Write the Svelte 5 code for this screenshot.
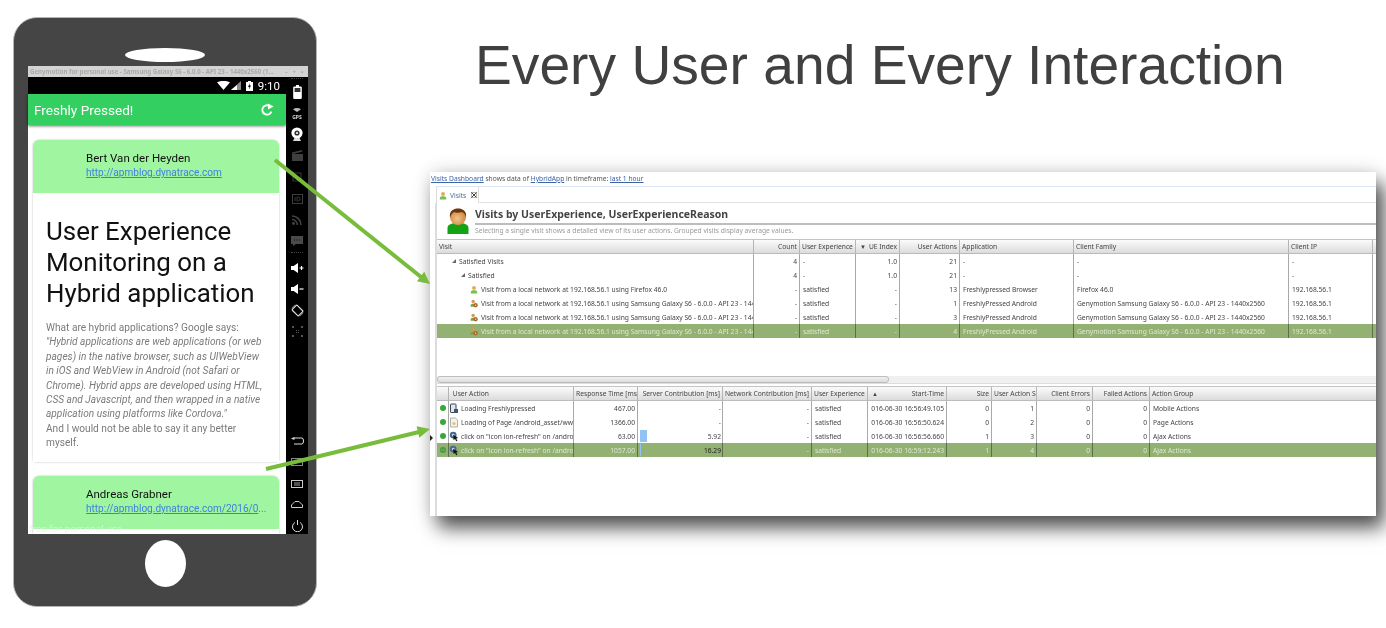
<script>
	const visitRows = [
		{ lvl: 'lvl0', tree: true, name: 'Satisfied Visits', cells: ['4', '-', '1.0', '21', '-', '-', '-'] },
		{ lvl: 'lvl1', tree: true, name: 'Satisfied', cells: ['4', '-', '1.0', '21', '-', '-', '-'] },
		{ lvl: 'lvl2', icon: 'user', name: 'Visit from a local network at 192.168.56.1 using Firefox 46.0', cells: ['-', 'satisfied', '-', '13', 'Freshlypressed Browser', 'Firefox 46.0', '192.168.56.1'] },
		{ lvl: 'lvl2', icon: 'mobile', name: 'Visit from a local network at 192.168.56.1 using Samsung Galaxy S6 - 6.0.0 - API 23 - 1440x2560', cells: ['-', 'satisfied', '-', '1', 'FreshlyPressed Android', 'Genymotion Samsung Galaxy S6 - 6.0.0 - API 23 - 1440x2560', '192.168.56.1'] },
		{ lvl: 'lvl2', icon: 'mobile', name: 'Visit from a local network at 192.168.56.1 using Samsung Galaxy S6 - 6.0.0 - API 23 - 1440x2560', cells: ['-', 'satisfied', '-', '3', 'FreshlyPressed Android', 'Genymotion Samsung Galaxy S6 - 6.0.0 - API 23 - 1440x2560', '192.168.56.1'] },
		{ lvl: 'lvl2', icon: 'mobile', selected: true, name: 'Visit from a local network at 192.168.56.1 using Samsung Galaxy S6 - 6.0.0 - API 23 - 1440x2560', cells: ['-', 'satisfied', '-', '4', 'FreshlyPressed Android', 'Genymotion Samsung Galaxy S6 - 6.0.0 - API 23 - 1440x2560', '192.168.56.1'] }
	];
	// alignment of the visit columns after the first one
	const visitAlign = ['r', 'l', 'r', 'r', 'l', 'l', 'l'];

	const actionRows = [
		{ icon: 'phone', name: 'Loading Freshlypressed', time: '467.00', server: '-', start: '016-06-30 16:56:49.105', size: '0', idx: '1', group: 'Mobile Actions' },
		{ icon: 'page', name: 'Loading of Page /android_asset/www/index.html', time: '1366.00', server: '-', start: '016-06-30 16:56:50.624', size: '0', idx: '2', group: 'Page Actions' },
		{ icon: 'click', name: 'click on "icon ion-refresh" on /android_asset/www', time: '63.00', server: '5.92', bar: 7, start: '016-06-30 16:56:56.660', size: '1', idx: '3', group: 'Ajax Actions' },
		{ icon: 'click', selected: true, name: 'click on "icon ion-refresh" on /android_asset/www', time: '1057.00', server: '16.29', bar: 1, start: '016-06-30 16:59:12.243', size: '1', idx: '4', group: 'Ajax Actions' }
	];
</script>

{#snippet tinyIcon(kind)}
	{#if kind === 'user'}
		<svg class="ico" viewBox="0 0 10 10"><circle cx="5" cy="3" r="2.400" fill="#e8a55a"/><path d="M1 10V8.200C1 6.800 2.400 6 5 6s4 .8 4 2.200V10z" fill="#7ac04c"/></svg>
	{:else if kind === 'mobile'}
		<svg class="ico" viewBox="0 0 10 10"><circle cx="4" cy="2.600" r="2.200" fill="#d89a50"/><path d="M0.800 9V7.400C0.800 6 2 5.200 4 5.200s3 .8 3 2.200V9z" fill="#7fa044"/><circle cx="7" cy="7.200" r="2.700" fill="#a8692c"/><circle cx="7" cy="7.200" r="1" fill="#f0d090"/></svg>
	{:else if kind === 'phone'}
		<svg class="ico big" viewBox="0 0 10 10"><rect x="1.500" y="0.500" width="5.500" height="8.500" rx=".6" fill="#dfe7f2" stroke="#3a4452" stroke-width="1"/><rect x="5" y="5.500" width="4" height="4" fill="#40566e"/></svg>
	{:else if kind === 'page'}
		<svg class="ico big" viewBox="0 0 10 10"><path d="M1.500.5h5l2 2v7h-7z" fill="#f6f3e4" stroke="#8b93a3" stroke-width=".7"/><circle cx="5" cy="6" r="1.600" fill="#e3c56a"/></svg>
	{:else}
		<svg class="ico big" viewBox="0 0 10 10"><circle cx="4.200" cy="3.600" r="3.400" fill="#47688f"/><circle cx="4.200" cy="3.600" r="1.400" fill="#c8d5e6"/><path d="M4.200 3.200l5 3.200-2 .5 1.200 2.400-1.200.5-1.100-2.400-1.600 1.200z" fill="#151515"/></svg>
	{/if}
{/snippet}

<div class="slide">
	<div class="phone">
		<div class="speaker"></div>
		<div class="screen">
			<div class="titlebar">
				<span>Genymotion for personal use - Samsung Galaxy S6 - 6.0.0 - API 23 - 1440x2560 (1...</span>
				<span class="winbtns">–&nbsp;&nbsp;&nbsp;+&nbsp;&nbsp;&nbsp;×</span>
			</div>
			<div class="device">
				<div class="android">
					<div class="statusbar">
						<svg width="13" height="9" viewBox="0 0 13 9"><path d="M0 1.200C3.800-.4 9.200-.4 13 1.200L6.500 9z" fill="#fff"/></svg>
						<svg class="signal" width="10" height="9" viewBox="0 0 10 9"><path d="M10 0v9H0z" fill="#8a8a8a"/><path d="M6 4v5H0z" fill="#fff"/></svg>
						<svg class="battery" width="7" height="10" viewBox="0 0 7 10"><path d="M2 0h3v1h2v9H0V1h2z" fill="#fff"/><path d="M4 2L2 6h1.400L3 8.500 5 4.600H3.600z" fill="#000"/></svg>
						<span class="clock">9:10</span>
					</div>
					<div class="toolbar">
						<span>Freshly Pressed!</span>
						<svg width="14" height="14" viewBox="0 0 14 14"><path d="M11.400 8.600A4.700 4.700 0 1 1 9.600 3" fill="none" stroke="#fff" stroke-width="1.900"/><path d="M8 .4l5.600 3.200L8 6.400z" fill="#fff"/></svg>
					</div>
					<div class="feed">
						<article class="card">
							<header class="card-head">
								<div class="author">Bert Van der Heyden</div>
								<div class="link">http://apmblog.dynatrace.com</div>
							</header>
							<div class="card-body">
								<h1>User Experience<br />Monitoring on a<br />Hybrid application</h1>
								<p>
									What are hybrid applications? Google says:<br />
									<em>"Hybrid applications are web applications (or web<br />
									pages) in the native browser, such as UIWebView<br />
									in iOS and WebView in Android (not Safari or<br />
									Chrome). Hybrid apps are developed using HTML,<br />
									CSS and Javascript, and then wrapped in a native<br />
									application using platforms like Cordova."</em><br />
									And I would not be able to say it any better<br />
									myself.
								</p>
							</div>
						</article>
						<article class="card">
							<header class="card-head">
								<div class="author">Andreas Grabner</div>
								<div class="link clipped"><span>http://apmblog.dynatrace.com/2016/0</span>...</div>
							</header>
							<div class="card-body stub"></div>
						</article>
						<div class="watermark">free for personal use</div>
					</div>
				</div>
				<div class="sidebar">
					<div class="grip"></div>
					<div class="tool"><svg width="9" height="14" viewBox="0 0 9 14"><path d="M3 0h3v1.400h1.600q1.200 0 1.200 1.200v10.200q0 1.200-1.200 1.200H1.400Q.2 14 .2 12.800V2.600q0-1.200 1.200-1.200H3z" fill="#fff"/><rect x="1.600" y="3" width="5.800" height="4" fill="#333"/></svg></div>
					<div class="tool"><svg width="14" height="12" viewBox="0 0 14 12"><path d="M3 2.200q4-2.600 8 0L7 5z" fill="#bbb"/><text x="7" y="11.500" text-anchor="middle" class="gps">GPS</text></svg></div>
					<div class="tool"><svg width="12" height="14" viewBox="0 0 12 14"><circle cx="6" cy="6" r="5.600" fill="#fff"/><circle cx="6" cy="6" r="2.600" fill="#333"/><circle cx="6" cy="6" r="1" fill="#fff"/><path d="M2 14l1.500-3h5L10 14z" fill="#ddd"/></svg></div>
					<div class="tool"><svg width="11" height="11" viewBox="0 0 11 11"><path d="M0 4h11v7H0zM0 2.600L10 0l.4 1.600L.4 4.200z" fill="#3f3f3f"/></svg></div>
					<div class="tool"><svg width="10" height="10" viewBox="0 0 10 10"><path d="M1 1h8v8H1z" fill="none" stroke="#333" stroke-width="1.200"/></svg></div>
					<div class="tool"><svg width="11" height="10" viewBox="0 0 11 10"><rect x=".5" y=".5" width="10" height="9" fill="none" stroke="#3c3c3c"/><path d="M3 3v4M5 3v4h1.500q1.500 0 1.500-2T6.500 3z" fill="none" stroke="#3c3c3c" stroke-width=".9"/></svg></div>
					<div class="tool"><svg width="10" height="10" viewBox="0 0 10 10"><circle cx="1.500" cy="8.500" r="1.400" fill="#444"/><path d="M0 4.600A5.400 5.400 0 0 1 5.400 10M0 1a9 9 0 0 1 9 9" fill="none" stroke="#444" stroke-width="1.500"/></svg></div>
					<div class="tool"><svg width="12" height="10" viewBox="0 0 12 10"><rect width="12" height="8" fill="#4a4a4a"/><path d="M2 8h3L2 10z" fill="#4a4a4a"/><path d="M3 4h1M5.500 4h1M8 4h1" stroke="#111"/></svg></div>
					<div class="grip low"></div>
					<div class="tool"><svg width="13" height="10" viewBox="0 0 13 10"><path d="M0 3h2.600L7 0v10L2.600 7H0z" fill="#fff"/><path d="M8.500 5h4M10.500 3v4" stroke="#fff" stroke-width="1.200"/></svg></div>
					<div class="tool"><svg width="13" height="10" viewBox="0 0 13 10"><path d="M0 3h2.600L7 0v10L2.600 7H0z" fill="#fff"/><path d="M8.500 5h4" stroke="#fff" stroke-width="1.200"/></svg></div>
					<div class="tool"><svg width="13" height="13" viewBox="0 0 13 13"><rect x="3" y="2" width="7" height="9" rx="1" transform="rotate(-45 6.500 6.500)" fill="none" stroke="#ddd" stroke-width="1.200"/><path d="M1 4.500A6 6 0 0 1 4.500 1M12 8.500A6 6 0 0 1 8.500 12" fill="none" stroke="#aaa" stroke-width=".8"/></svg></div>
					<div class="tool"><svg width="11" height="11" viewBox="0 0 11 11"><path d="M0 0h2v2H0zM9 0h2v2H9zM0 9h2v2H0zM9 9h2v2H9zM4 4h1v1H4zM6 4h1v1H6zM4 6h1v1H4zM6 6h1v1H6z" fill="#555"/></svg></div>
					<div class="nav-tools">
						<div class="tool"><svg width="13" height="8" viewBox="0 0 13 8"><path d="M3 1h8q1.500 0 1.500 3T11 7H3" fill="none" stroke="#ddd" stroke-width="1"/><path d="M0 1.400L3.400 0v3z" fill="#ddd"/></svg></div>
						<div class="tool"><svg width="12" height="8" viewBox="0 0 12 8"><rect x=".5" y=".5" width="11" height="7" fill="none" stroke="#888"/></svg></div>
						<div class="tool"><svg width="12" height="8" viewBox="0 0 12 8"><rect x=".5" y=".5" width="11" height="7" fill="none" stroke="#ccc"/><path d="M3 3h6M3 5h6" stroke="#ccc" stroke-width=".8"/></svg></div>
						<div class="tool"><svg width="12" height="7" viewBox="0 0 12 7"><path d="M.5 6.500h11V4L8 .5H4L.5 4z" fill="none" stroke="#ccc"/></svg></div>
						<div class="tool"><svg width="11" height="12" viewBox="0 0 11 12"><path d="M3 2.400a5 5 0 1 0 5 0M5.500 0v5" fill="none" stroke="#ddd" stroke-width="1"/></svg></div>
					</div>
				</div>
			</div>
		</div>
		<div class="home"></div>
	</div>

	<div class="right">
		<div class="headline">Every User and Every Interaction</div>
		<div class="window-shadow">
			<div class="window">
				<div class="crumbs"><u>Visits Dashboard</u> shows data of <u>HybridApp</u> in timeframe: <u>last 1 hour</u></div>
				<div class="tabs">
					<div class="tab">
						<svg class="ico" viewBox="0 0 10 10"><circle cx="5" cy="3" r="2.400" fill="#e8a55a"/><path d="M1 10V8.200C1 6.800 2.400 6 5 6s4 .8 4 2.200V10z" fill="#7ac04c"/></svg>
						<span>Visits</span>
						<svg class="close" viewBox="0 0 6 6"><rect x=".5" y=".5" width="5" height="5" fill="none" stroke="#888" stroke-width=".6"/><path d="M.5.5l5 5M5.500.5l-5 5" stroke="#444" stroke-width="1"/></svg>
					</div>
				</div>
				<div class="panel">
					<div class="view-head">
						<svg class="avatar" width="22" height="26" viewBox="0 0 22 26">
							<defs>
								<radialGradient id="face" cx=".45" cy=".6" r=".6"><stop offset="0" stop-color="#f4c48a"/><stop offset="1" stop-color="#c98238"/></radialGradient>
							</defs>
							<path d="M.5 26v-6c0-3 3-5 10.500-5s10.500 2 10.500 5v6q0 .5-1 .5H1.500Q.5 26.500.5 26z" fill="#14a314"/>
							<circle cx="11" cy="9" r="8" fill="url(#face)"/>
							<path d="M3 9.500C2 3 6.500.5 11 .5s9 2.500 8 9q-1-4.500-4-5.500-5 1.500-8 0-3 1.500-4 5.500z" fill="#6b3413"/>
						</svg>
						<div class="view-titles">
							<div class="view-title">Visits by UserExperience, UserExperienceReason</div>
							<div class="view-sub">Selecting a single visit shows a detailed view of its user actions. Grouped visits display average values.</div>
						</div>
					</div>

					<div class="grid visits head">
						<div class="th">Visit</div>
						<div class="th r">Count</div>
						<div class="th">User Experience</div>
						<div class="th sort"><span>▼</span><span>UE Index</span></div>
						<div class="th r">User Actions</div>
						<div class="th">Application</div>
						<div class="th">Client Family</div>
						<div class="th">Client IP</div>
						<div class="th last"></div>
					</div>
					{#each visitRows as row}
						<div class="grid visits row" class:selected={row.selected}>
							<div class="td name {row.lvl}">
								{#if row.tree}<i class="twisty"></i>{/if}
								{#if row.icon}{@render tinyIcon(row.icon)}{/if}
								<span>{row.name}</span>
							</div>
							{#each row.cells as cell, i}
								<div class="td pad" class:r={visitAlign[i] === 'r'}><span>{cell}</span></div>
							{/each}
							<div class="td last"></div>
						</div>
					{/each}

					<div class="scroll-gap"></div>
					<div class="scrollbar"><div class="thumb"></div></div>

					<div class="grid actions head">
						<div class="th"></div>
						<div class="th">&nbsp;User Action</div>
						<div class="th clip"><span>Response Time [ms]</span></div>
						<div class="th r">Server Contribution [ms]</div>
						<div class="th r">Network Contribution [ms]</div>
						<div class="th">User Experience</div>
						<div class="th sort"><span>▲</span><span>Start-Time</span></div>
						<div class="th r">Size</div>
						<div class="th clip"><span>User Action Sequence</span></div>
						<div class="th r">Client Errors</div>
						<div class="th r">Failed Actions</div>
						<div class="th last">Action Group</div>
					</div>
					{#each actionRows as row}
						<div class="grid actions row" class:selected={row.selected}>
							<div class="td dotcell"><i class="dot"></i></div>
							<div class="td name">{@render tinyIcon(row.icon)}<span>{row.name}</span></div>
							<div class="td pad r"><span>{row.time}</span></div>
							<div class="td server">
								{#if row.bar}<i class="bar" style="width:{row.bar}px"></i>{/if}
								<span class="dark">{row.server}</span>
							</div>
							<div class="td pad r"><span>-</span></div>
							<div class="td pad"><span>satisfied</span></div>
							<div class="td pad r"><span>{row.start}</span></div>
							<div class="td pad r"><span>{row.size}</span></div>
							<div class="td pad r"><span>{row.idx}</span></div>
							<div class="td pad r"><span>0</span></div>
							<div class="td pad r"><span>0</span></div>
							<div class="td pad last"><span>{row.group}</span></div>
						</div>
					{/each}
				</div>
			</div>
		</div>
	</div>

	<i class="sash"></i>

	<svg class="arrows" width="1386" height="628" viewBox="0 0 1386 628">
		<path d="M275 160L421 277" stroke="#78bc3c" stroke-width="4" fill="none"/>
		<path d="M430 284L417 281.200 424.300 271.800z" fill="#78bc3c"/>
		<path d="M266 469L419 432" stroke="#78bc3c" stroke-width="4" fill="none"/>
		<path d="M430 429L416.600 426.200 419.400 437.800z" fill="#78bc3c"/>
	</svg>
</div>

<style>
	:global(body) {
		margin: 0;
		background: #fff;
	}

	.slide {
		position: relative;
		display: flex;
		width: 1386px;
		height: 628px;
		overflow: hidden;
		background: #fff;
		font-family: 'Noto Sans', sans-serif;
	}

	/* phone */
	.phone {
		display: flex;
		flex-direction: column;
		align-items: center;
		box-sizing: border-box;
		flex: none;
		width: 304px;
		height: 590px;
		margin: 17px 0 0 13px;
		background: #444544;
		border: 1px solid #b5b5b5;
		border-radius: 24px;
		filter: blur(0.35px);
	}

	.speaker {
		width: 80px;
		height: 14px;
		margin-top: 30px;
		background: #fff;
		border-radius: 40px / 7px;
	}

	.screen {
		align-self: flex-start;
		display: flex;
		flex-direction: column;
		width: 280px;
		height: 468px;
		margin: 4px 0 0 14px;
		font-family: Roboto, sans-serif;
	}

	.titlebar {
		display: flex;
		justify-content: space-between;
		align-items: center;
		height: 11px;
		padding: 0 2px;
		background: #d3d3d3;
		color: #a9a9a9;
		font: bold 6.1px 'Noto Sans', sans-serif;
		white-space: nowrap;
		overflow: hidden;
	}

	.winbtns {
		font-size: 6px;
		padding-right: 2px;
	}

	.device {
		display: flex;
		flex: 1;
		min-height: 0;
		background: #000;
	}

	.android {
		display: flex;
		flex-direction: column;
		width: 258px;
	}

	.statusbar {
		display: flex;
		align-items: center;
		justify-content: flex-end;
		height: 17px;
		padding-right: 6px;
		color: #fff;
		font-size: 11.5px;
	}

	.signal {
		margin-left: 1px;
	}

	.battery {
		margin-left: 5px;
	}

	.clock {
		margin-left: 5px;
	}

	.toolbar {
		position: relative;
		z-index: 1;
		display: flex;
		align-items: center;
		justify-content: space-between;
		height: 31px;
		padding: 0 12px 0 6px;
		background: #33cf60;
		color: #fff;
		font-size: 13.6px;
		box-shadow: 0 1px 3px rgba(0, 0, 0, 0.6);
	}

	.feed {
		position: relative;
		flex: 1;
		overflow: hidden;
		padding: 15px 7px 0 5px;
		background: #fff;
	}

	.card {
		margin-bottom: 14px;
		border-radius: 6px 6px 3px 3px;
		box-shadow: 0 0 2px rgba(0, 0, 0, 0.3);
	}

	.card-head {
		box-sizing: border-box;
		height: 53px;
		padding: 11px 4px 0 53px;
		background: #a0f5a0;
		border-radius: 6px 6px 0 0;
	}

	.author {
		color: #111;
		font-size: 11.5px;
		line-height: 14px;
	}

	.link {
		margin-top: 1px;
		color: #3f7fe0;
		font-size: 10.05px;
		line-height: 14px;
		white-space: nowrap;
	}

	.link:not(.clipped),
	.clipped span {
		text-decoration: underline;
	}

	.card-body {
		padding: 23px 6px 11px 13px;
		background: #fff;
	}

	.card-body.stub {
		height: 20px;
		box-sizing: border-box;
		padding: 0;
	}

	h1 {
		margin: 0 0 12px;
		color: #111;
		font-size: 25.9px;
		font-weight: 400;
		line-height: 31px;
		white-space: nowrap;
	}

	p {
		margin: 0;
		color: #7a7a7a;
		font-size: 10.15px;
		line-height: 14.4px;
		white-space: nowrap;
	}

	.watermark {
		position: absolute;
		left: 1px;
		bottom: -1px;
		color: rgba(235, 240, 235, 0.75);
		font: 9.5px/12px 'Noto Sans', sans-serif;
	}

	.sidebar {
		display: flex;
		flex-direction: column;
		align-items: center;
		width: 22px;
		padding-top: 1px;
	}

	.grip {
		width: 12px;
		height: 3px;
		border-top: 1px dotted #444;
		box-sizing: border-box;
	}

	.grip.low {
		height: 5px;
	}

	.tool {
		display: flex;
		align-items: center;
		justify-content: center;
		flex: none;
		height: 21.4px;
	}

	.nav-tools {
		margin-top: auto;
		margin-bottom: -3px;
	}

	.gps {
		fill: #ddd;
		font: bold 5px 'Noto Sans', sans-serif;
	}

	.home {
		width: 41px;
		height: 47px;
		margin-top: 6px;
		background: #fff;
		border-radius: 50%;
	}

	/* right side */
	.right {
		flex: 1;
		min-width: 0;
		padding-left: 113px;
	}

	.headline {
		height: 172px;
		margin-left: 45px;
		padding-top: 47px;
		box-sizing: border-box;
		color: #404040;
		font: 55.2px/36px 'Liberation Sans', sans-serif;
		white-space: nowrap;
	}

	.window-shadow {
		width: 946px;
		height: 344px;
		background: #fff;
		box-shadow: 0 0 18px rgba(0, 0, 0, 0.14), 8px 12px 18px rgba(0, 0, 0, 0.66);
	}

	.window {
		height: 100%;
		overflow: hidden;
		color: #444;
		font-size: 6.7px;
		filter: blur(0.35px);
	}

	.crumbs {
		height: 14px;
		padding-left: 1px;
		color: #555;
		line-height: 13px;
		white-space: nowrap;
	}

	.crumbs u {
		color: #3c63a8;
	}

	.tabs {
		display: flex;
		height: 17px;
		margin-left: 6px;
		border-top: 1px solid #dde4f2;
		border-bottom: 1px solid #e2e2e2;
		box-sizing: border-box;
	}

	.tab {
		display: flex;
		align-items: center;
		gap: 3px;
		width: 43px;
		height: 16px;
		padding-left: 2px;
		box-sizing: border-box;
		background: #fff;
		border-right: 1px solid #ddd;
		border-left: 1px solid #ddd;
		color: #4d6f9c;
	}

	.close {
		width: 6px;
		height: 6px;
		margin-left: 2px;
	}

	.ico {
		flex: none;
		width: 8px;
		height: 9px;
	}

	.ico.big {
		width: 10px;
		height: 11px;
	}

	.panel {
		height: 313px;
		margin-left: 5px;
		border-left: 2px solid #dcdcdc;
	}

	.view-head {
		display: flex;
		height: 36px;
		box-sizing: border-box;
		padding: 5px 0 0 10px;
		gap: 6px;
	}

	.avatar {
		flex: none;
	}

	.view-titles {
		flex: 1;
		min-width: 0;
	}

	.view-title {
		height: 15px;
		border-bottom: 2px solid #bdbdbd;
		color: #444;
		font-size: 10.5px;
		font-weight: 700;
		line-height: 13px;
		white-space: nowrap;
	}

	.view-sub {
		margin-top: 1px;
		color: #9a9a9a;
		font-size: 6.7px;
		line-height: 9px;
		white-space: nowrap;
	}

	.grid {
		display: grid;
		box-sizing: border-box;
	}

	.visits {
		grid-template-columns: 317px 46px 56px 44px 60px 114px 215px 84px 1fr;
	}

	.actions {
		grid-template-columns: 12px 125px 64px 85px 89px 56px 79px 45px 45px 56px 57px 1fr;
	}

	.head {
		height: 15px;
		border-top: 1px solid #c4c4c4;
		border-bottom: 1px solid #bbb;
		background: linear-gradient(#fbfbfb, #dcdcdc);
	}

	.th {
		display: flex;
		align-items: center;
		overflow: hidden;
		padding: 0 2px;
		border-right: 1px solid #b5b5b5;
		white-space: nowrap;
	}

	.th.r {
		justify-content: flex-end;
	}

	.th.sort {
		justify-content: space-between;
		padding: 0 2px 0 3px;
	}

	.sort span:first-child {
		font-size: 6px;
		margin-left: 1px;
	}

	.th.last {
		border-right: 0;
	}

	.row {
		height: 14px;
	}

	.td {
		display: flex;
		align-items: center;
		gap: 2px;
		overflow: hidden;
		border-right: 1px solid #a9a9a9;
		white-space: nowrap;
	}

	.td.pad {
		padding: 0 2px 0 3px;
	}

	.td.r {
		justify-content: flex-end;
	}

	.td.last {
		border-right: 0;
	}

	.td.name {
		padding-left: 0;
	}

	.td.lvl0 {
		padding-left: 15px;
		gap: 3px;
	}

	.td.lvl1 {
		padding-left: 24px;
		gap: 3px;
	}

	.td.lvl2 {
		padding-left: 33px;
		gap: 3px;
	}

	.twisty {
		flex: none;
		width: 0;
		height: 0;
		border-bottom: 4px solid #666;
		border-left: 4px solid transparent;
	}

	.dotcell {
		justify-content: center;
	}

	.dot {
		width: 6px;
		height: 6px;
		border-radius: 50%;
		background: #3aa73a;
	}

	.td.server {
		justify-content: space-between;
		padding: 0 0 0 2px;
	}

	.td.server .dark {
		margin-left: auto;
		padding-right: 1px;
	}

	.bar {
		flex: none;
		height: 12px;
		background: #90c2f4;
	}

	.selected {
		background: #93b173;
		color: #dfe8d0;
	}

	.selected .td {
		border-right-color: #5d6e4c;
	}

	.selected .server .dark {
		color: #222;
	}

	.selected .dot {
		background: #5cae50;
		box-shadow: inset 0 2px 0 #4f9a46, inset 0 -2px 0 #4f9a46;
	}

	.scroll-gap {
		height: 38px;
	}

	.scrollbar {
		height: 7px;
		background: #f0f0f0;
		border-bottom: 1px solid #ddd;
		margin-bottom: 2px;
	}

	.thumb {
		box-sizing: border-box;
		width: 452px;
		height: 7px;
		border: 1px solid #bdbdbd;
		border-radius: 3px;
		background: linear-gradient(#f0f0f0, #dcdcdc);
	}

	.sash {
		position: absolute;
		left: 430px;
		top: 435px;
		width: 0;
		height: 0;
		border-top: 3px solid transparent;
		border-bottom: 3px solid transparent;
		border-left: 3px solid #222;
	}

	.arrows {
		position: absolute;
		left: 0;
		top: 0;
		pointer-events: none;
	}
</style>
